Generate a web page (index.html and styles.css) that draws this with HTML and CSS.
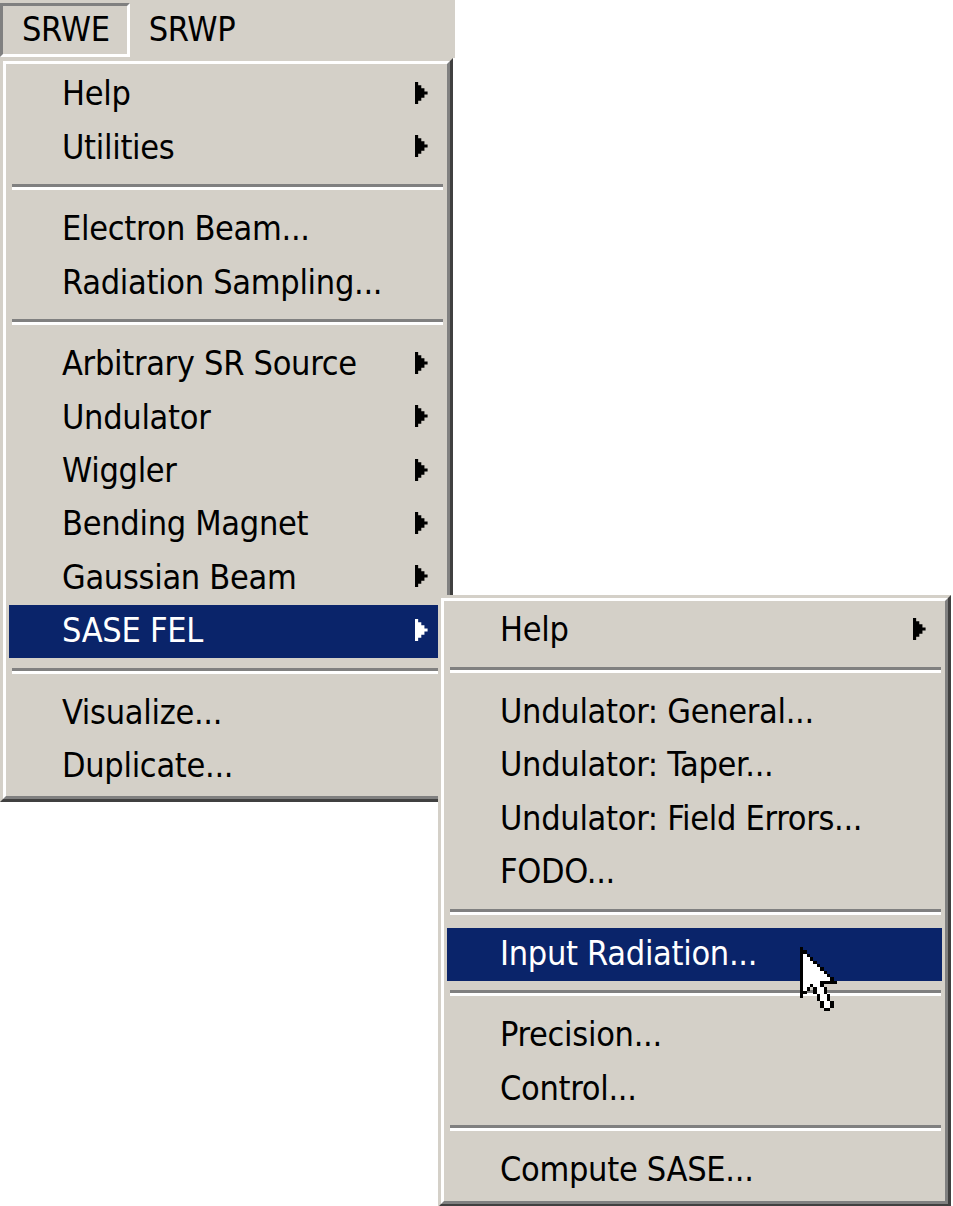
FILE: index.html
```html
<!DOCTYPE html>
<html>
<head>
<meta charset="utf-8">
<link rel="stylesheet" href="styles.css">
</head>
<body>
<div class="screen">
  <div class="menubar">
    <div class="mb-item active">SRWE</div>
    <div class="mb-item second">SRWP</div>
  </div>

  <div class="menu main-menu">
    <div class="menu-inner">
      <div class="item"><span class="label">Help</span><svg class="arrow" viewBox="0 0 4 7"><path d="M0 0H1V1H2V2H3V3H4V4H3V5H2V6H1V7H0Z"/></svg></div>
      <div class="item"><span class="label">Utilities</span><svg class="arrow" viewBox="0 0 4 7"><path d="M0 0H1V1H2V2H3V3H4V4H3V5H2V6H1V7H0Z"/></svg></div>
      <div class="sep"></div>
      <div class="item"><span class="label">Electron Beam...</span></div>
      <div class="item"><span class="label">Radiation Sampling...</span></div>
      <div class="sep"></div>
      <div class="item"><span class="label">Arbitrary SR Source</span><svg class="arrow" viewBox="0 0 4 7"><path d="M0 0H1V1H2V2H3V3H4V4H3V5H2V6H1V7H0Z"/></svg></div>
      <div class="item"><span class="label">Undulator</span><svg class="arrow" viewBox="0 0 4 7"><path d="M0 0H1V1H2V2H3V3H4V4H3V5H2V6H1V7H0Z"/></svg></div>
      <div class="item"><span class="label">Wiggler</span><svg class="arrow" viewBox="0 0 4 7"><path d="M0 0H1V1H2V2H3V3H4V4H3V5H2V6H1V7H0Z"/></svg></div>
      <div class="item"><span class="label">Bending Magnet</span><svg class="arrow" viewBox="0 0 4 7"><path d="M0 0H1V1H2V2H3V3H4V4H3V5H2V6H1V7H0Z"/></svg></div>
      <div class="item"><span class="label">Gaussian Beam</span><svg class="arrow" viewBox="0 0 4 7"><path d="M0 0H1V1H2V2H3V3H4V4H3V5H2V6H1V7H0Z"/></svg></div>
      <div class="item selected"><span class="label">SASE FEL</span><svg class="arrow" viewBox="0 0 4 7"><path d="M0 0H1V1H2V2H3V3H4V4H3V5H2V6H1V7H0Z"/></svg></div>
      <div class="sep"></div>
      <div class="item"><span class="label">Visualize...</span></div>
      <div class="item"><span class="label">Duplicate...</span></div>
    </div>
  </div>

  <div class="menu sub-menu">
    <div class="menu-inner">
      <div class="item"><span class="label">Help</span><svg class="arrow" viewBox="0 0 4 7"><path d="M0 0H1V1H2V2H3V3H4V4H3V5H2V6H1V7H0Z"/></svg></div>
      <div class="sep"></div>
      <div class="item"><span class="label">Undulator: General...</span></div>
      <div class="item"><span class="label">Undulator: Taper...</span></div>
      <div class="item"><span class="label">Undulator: Field Errors...</span></div>
      <div class="item"><span class="label">FODO...</span></div>
      <div class="sep"></div>
      <div class="item selected"><span class="label">Input Radiation...</span></div>
      <div class="sep"></div>
      <div class="item"><span class="label">Precision...</span></div>
      <div class="item"><span class="label">Control...</span></div>
      <div class="sep"></div>
      <div class="item"><span class="label">Compute SASE...</span></div>
    </div>
  </div>

  <svg class="cursor" viewBox="0 0 11 19" shape-rendering="crispEdges">
    <path class="cur-black" d="M0 0h1v1H0z M0 1h2v1H0z M0 2h3v1H0z M0 3h4v1H0z M0 4h5v1H0z M0 5h6v1H0z M0 6h7v1H0z M0 7h8v1H0z M0 8h9v1H0z M0 9h10v1H0z M0 10h11v1H0z M0 11h7v1H0z M0 12h3v1H0z M4 12h4v1H4z M0 13h2v1H0z M4 13h4v1H4z M0 14h1v1H0z M5 14h4v1H5z M5 15h4v1H5z M6 16h4v1H6z M6 17h4v1H6z M7 18h2v1H7z"/>
    <path class="cur-white" d="M1 2h1v1H1z M1 3h2v1H1z M1 4h3v1H1z M1 5h4v1H1z M1 6h5v1H1z M1 7h6v1H1z M1 8h7v1H1z M1 9h8v1H1z M1 10h5v1H1z M1 11h2v1H1z M4 11h2v1H4z M1 12h1v1H1z M5 12h2v1H5z M5 13h2v1H5z M6 14h2v1H6z M6 15h2v1H6z M7 16h2v1H7z M7 17h2v1H7z"/>
  </svg>
</div>
</body>
</html>
```

FILE: styles.css
```css
html, body {
  margin: 0;
  padding: 0;
  background: #ffffff;
  overflow: hidden;
}

.screen {
  position: relative;
  width: 953px;
  height: 1206px;
  font-family: "DejaVu Sans Condensed", "DejaVu Sans", sans-serif;
  font-stretch: condensed;
  font-size: 34px;
  letter-spacing: -0.3px;
  color: #000;
}

.menubar {
  width: 455px;
  height: 58px;
  background: #d4d0c8;
  display: flex;
  align-items: flex-start;
  box-sizing: border-box;
  padding-top: 3px;
}

.mb-item {
  height: 54px;
  box-sizing: border-box;
  border: 3px solid transparent;
  padding: 0 17px 0 19px;
  display: flex;
  align-items: center;
  line-height: 1;
  padding-bottom: 2px;
}

.mb-item.active {
  border-top-color: #808080;
  border-left-color: #808080;
  border-right-color: #ffffff;
  border-bottom-color: #ffffff;
}

.mb-item.second {
  padding-left: 16px;
}

.menu {
  background: #d4d0c8;
  box-sizing: border-box;
  border-style: solid;
  border-width: 3px;
  border-color: #d4d0c8 #404040 #404040 #d4d0c8;
}

.menu-inner {
  border-style: solid;
  border-width: 3px;
  border-color: #ffffff #808080 #808080 #ffffff;
  padding: 4px 3px 2px 3px;
  display: flex;
  flex-direction: column;
}

.main-menu {
  width: 453px;
}

.sub-menu {
  position: absolute;
  left: 438px;
  top: 595px;
  width: 513px;
}

.sub-menu .menu-inner {
  padding: 3px 3px 3px 3px;
}

.item {
  height: 53.4px;
  display: flex;
  align-items: center;
  padding-left: 53px;
  padding-right: 16px;
  line-height: 1;
  white-space: nowrap;
}

.item .label {
  flex: 1;
  padding-bottom: 3px;
}

.item.selected {
  background: #0a246a;
  color: #ffffff;
}

.arrow {
  width: 12.6px;
  height: 22px;
  fill: #000;
  margin-bottom: 4px;
}

.item.selected .arrow {
  fill: #ffffff;
}

.sep {
  height: 0;
  margin: 9.4px 1px 12.9px 3px;
  border-top: 3px solid #808080;
  border-bottom: 3px solid #ffffff;
}

.cursor {
  position: absolute;
  left: 800px;
  top: 947px;
  width: 37px;
  height: 64px;
}

.cur-black {
  fill: #000;
}

.cur-white {
  fill: #fff;
}
```
